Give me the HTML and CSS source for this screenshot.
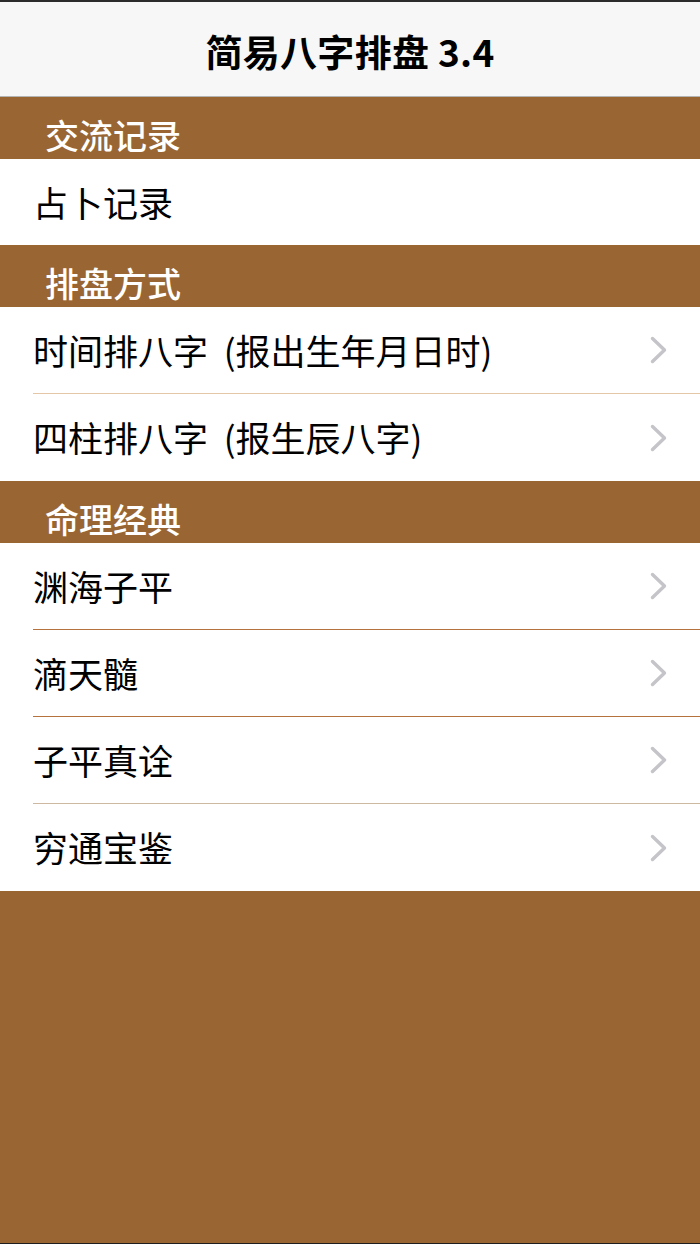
FILE: index.html
```html
<!DOCTYPE html>
<html lang="zh-CN">
<head>
    <meta charset="UTF-8">
    <meta name="viewport" content="width=device-width, initial-scale=1.0">
    <title>简易八字排盘 3.4</title>
    <link rel="stylesheet" href="styles.css">
</head>
<body>

    <div class="screen">
        <div class="navbar">
            <h1 class="title">简易八字排盘 3.4</h1>
        </div>

        <!-- 交流记录 -->
        <div class="section-head">交流记录</div>
        <div class="group">
            <div class="cell cell-single">
                <span class="cell-text">占卜记录</span>
            </div>
        </div>

        <!-- 排盘方式 -->
        <div class="section-head">排盘方式</div>
        <div class="group">
            <div class="cell sep-light">
                <span class="cell-text">时间排八字&nbsp;&nbsp;(报出生年月日时)</span>
                <svg class="chevron" viewBox="0 0 17 28"><polyline points="2.5,2.5 14.5,14 2.5,25.5"/></svg>
            </div>
            <div class="cell">
                <span class="cell-text">四柱排八字&nbsp;&nbsp;(报生辰八字)</span>
                <svg class="chevron" viewBox="0 0 17 28"><polyline points="2.5,2.5 14.5,14 2.5,25.5"/></svg>
            </div>
        </div>

        <!-- 命理经典 -->
        <div class="section-head">命理经典</div>
        <div class="group">
            <div class="cell sep-dark">
                <span class="cell-text">渊海子平</span>
                <svg class="chevron" viewBox="0 0 17 28"><polyline points="2.5,2.5 14.5,14 2.5,25.5"/></svg>
            </div>
            <div class="cell sep-dark">
                <span class="cell-text">滴天髓</span>
                <svg class="chevron" viewBox="0 0 17 28"><polyline points="2.5,2.5 14.5,14 2.5,25.5"/></svg>
            </div>
            <div class="cell sep-grey">
                <span class="cell-text">子平真诠</span>
                <svg class="chevron" viewBox="0 0 17 28"><polyline points="2.5,2.5 14.5,14 2.5,25.5"/></svg>
            </div>
            <div class="cell">
                <span class="cell-text">穷通宝鉴</span>
                <svg class="chevron" viewBox="0 0 17 28"><polyline points="2.5,2.5 14.5,14 2.5,25.5"/></svg>
            </div>
        </div>
    </div>

</body>
</html>
```

FILE: styles.css
```css
html, body { margin: 0; padding: 0; }
body { background: #996633; font-family: "Noto Sans CJK SC", "Noto Sans", sans-serif; color: #000; }
.screen { min-height: 100vh; box-sizing: border-box; border-top: 2px solid #2b2b2b; border-bottom: 1px solid #1e1e1e; }

.navbar { height: 94px; background: #f7f7f7; border-bottom: 1px solid #b4b4b4; display: flex; align-items: center; justify-content: center; }
.title { margin: 0; font-size: 37px; font-weight: 600; letter-spacing: 0.3px; line-height: 1; padding-top: 4px; }

.section-head { height: 62px; box-sizing: border-box; padding: 0 0 3px 45px; display: flex; align-items: flex-end; color: #fff; font-size: 34px; font-weight: 500; line-height: 1.2; }

.group { background: #fff; }
.cell { height: 87px; box-sizing: border-box; margin-left: 33px; padding: 0 33px 0 0; display: flex; align-items: center; justify-content: space-between; }
.cell-single { height: 86px; }
.cell-text { font-size: 35px; line-height: 1; padding-bottom: 2px; }
.sep-light { border-bottom: 1px solid #e3c7a7; }
.sep-dark { border-bottom: 1px solid #b5723c; }
.sep-grey { border-bottom: 1px solid #cdb8a2; }

.chevron { width: 17px; height: 28px; flex: none; }
.chevron polyline { fill: none; stroke: #c4c4c9; stroke-width: 3.4; stroke-linecap: round; stroke-linejoin: round; }
```
